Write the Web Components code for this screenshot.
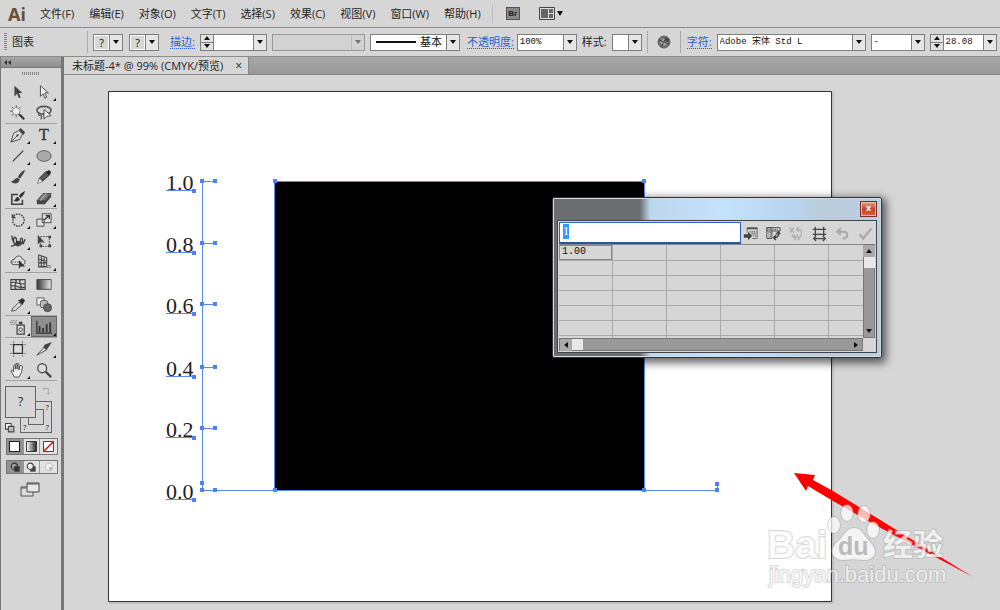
<!DOCTYPE html>
<html lang="zh-CN">
<head>
<meta charset="utf-8">
<title>未标题-4</title>
<style>
html,body{margin:0;height:100%}
body{font:11px/16px "Open Sans","Noto Sans CJK SC",sans-serif;color:#262626;background:#d6d6d6;overflow:hidden}
</style>
</head>
<body>
<design-app></design-app>
<script>
const define=(name,html,setup)=>customElements.define(name,class extends HTMLElement{
  connectedCallback(){
    if(this.shadowRoot)return;
    const root=this.attachShadow({mode:"open"});
    root.innerHTML=typeof html==="function"?html(this):html;
    if(setup)setup(this,root);
  }
});

const ICONS={
select:'<path d="M5 2v12l3-3 2 5 2-1-2-5h4z" fill="#444"/>',
direct:'<path d="M5 2v12l3-3 2 5 2-1-2-5h4z" fill="#eee" stroke="#444"/>',
wand:'<path d="M10 10l6 6" stroke="#333" stroke-width="2.4"/><circle cx="7" cy="7" r="4" fill="#eee" stroke="#666" stroke-dasharray="2 1"/><path d="M7 0v3M7 11v3M0 7h3M2 2l2 2M12 2l-2 2M2 12l2-2" stroke="#555"/>',
lasso:'<ellipse cx="9" cy="6" rx="8" ry="4.500" fill="none" stroke="#555" stroke-width="1.8"/><path d="M4 9c-2 1-1 3 1 3s2 3 0 4" fill="none" stroke="#555" stroke-width="1.4"/><path d="M9 5v11l3-3 5-1z" fill="#eee" stroke="#444"/>',
pen:'<path d="M1 17l3-10 6-3 4 4-3 6z" fill="#ddd" stroke="#444"/><path d="M10 3l2-2 5 5-2 3z" fill="#444"/><path d="M2 16l6-6" stroke="#444"/><circle cx="8.500" cy="9.500" r="1.300" fill="#444"/>',
type:'<text x="9" y="15" text-anchor="middle" font-family="Liberation Serif,serif" font-size="18" fill="#333" stroke="#333" stroke-width=".4">T</text>',
line:'<path d="M3 15L15 3" stroke="#444" stroke-width="1.400"/>',
ellipse:'<ellipse cx="9" cy="9" rx="8" ry="6" fill="#aaa" stroke="#555"/>',
brush:'<path d="M17 1c-4 1-7 5-8 8l2 2c2-3 5-6 6-10z" fill="#444"/><path d="M9 10c-3-1-4 4-8 4 4 4 9 2 10-2z" fill="#444"/>',
pencil:'<path d="M2 16l2-6 7-7 4 4-8 7z" fill="#555" stroke="#333"/><path d="M11 3l4 4 2-3-2-3z" fill="#222"/><path d="M2 16l2-5 3 3z" fill="#eee"/>',
blob:'<path d="M9 5H2v11h12v-5" fill="none" stroke="#444" stroke-width="1.800"/><path d="M17 1c-3 1-6 4-7 6l2 2c2-2 4-4 5-8z" fill="#333"/><path d="M9 8c-3 0-2 3-5 4 4 2 7 0 7-2z" fill="#333"/>',
eraser:'<path d="M1 12l7-8h9l-7 8z" fill="#777" stroke="#444"/><path d="M1 12h9v4H1zM10 12l7-8v4l-7 8z" fill="#444"/><path d="M5 12l6-8" stroke="#ccc"/>',
rotate:'<path d="M4 4c5-4 12 0 12 5s-6 9-10 6-3-6-2-8" fill="none" stroke="#444" stroke-width="1.500" stroke-dasharray="2 1"/><path d="M2 2v5h5z" fill="#444"/>',
scale:'<path d="M7 2h10v10H7zM1 8h8v8H1z" fill="#ddd" stroke="#444"/><path d="M9 9l6-5M11 4h4v4" fill="none" stroke="#333" stroke-width="1.400"/>',
width:'<path d="M2 3c1 6 2 9 4 9s2-6 0-7-3 4-1 7 6 3 8 0 1-6 0-6-2 3-1 5 4 0 5-4M1 15c6-1 9-5 15-3" fill="none" stroke="#444" stroke-width="1.600"/><path d="M7 9h4v4H7z" fill="#333"/>',
free:'<path d="M5 4h10v11H5z" fill="none" stroke="#444" stroke-dasharray="2 1"/><path d="M2 2v11l3-3 5 1z" fill="#444"/><path d="M14 3h3v3h-3zM14 13h3v3h-3zM4 13h3v3H4z" fill="#444"/>',
shape:'<path d="M5 12c-5 0-5-6 0-6 1-5 8-5 9 0 4 0 4 6 0 6z" fill="#ddd" stroke="#444"/><path d="M2 9h11" stroke="#555" stroke-dasharray="2 1"/><path d="M10 7v10l2-3h5z" fill="#333"/>',
persp:'<path d="M3 1l9 3v10H3zM6 2v12M9 3v11M3 6l9 2M3 10h9" fill="none" stroke="#444" stroke-width="1.200"/><path d="M2 15h15M12 13h5" stroke="#777"/>',
mesh:'<path d="M1 4h16v11H1zM1 8c5-4 10 4 16 0M1 12c5-4 10 4 16 0M6 4c4 4-4 6 1 11M12 4c-4 4 4 7-1 11" fill="none" stroke="#444" stroke-width="1.300"/>',
gradient:'<defs><linearGradient id="g"><stop stop-color="#333"/><stop offset="1" stop-color="#eee"/></linearGradient></defs><path d="M1 4h16v11H1z" fill="url(#g)" stroke="#444"/>',
dropper:'<path d="M2 16l1-3 7-7 3 3-7 6z" fill="#ddd" stroke="#444"/><path d="M9 4l5 5 1-2 2-3-3-3-3 2z" fill="#333"/>',
blend:'<path d="M1 1h8v8H1z" fill="#eee" stroke="#555"/><rect x="5" y="4" width="8" height="8" rx="2" fill="#bbb" stroke="#555"/><circle cx="13" cy="12" r="4.500" fill="#666" stroke="#444"/>',
spray:'<path d="M8 7h8v10H8z" fill="#ddd" stroke="#444" stroke-width="1.400"/><path d="M10 3h4v3h-4z" fill="#444"/><circle cx="12" cy="12" r="2" fill="none" stroke="#444"/><path d="M1 2h8M0 4h8M1 6h7" stroke="#555" stroke-dasharray="1 1"/>',
graph:'<path d="M1 2v14h17" fill="none" stroke="#333" stroke-width="1.400"/><path d="M3 8h2v7H3zM7 10h2v5H7zM11 6h2v9h-2zM15 4h2v11h-2z" fill="#333"/>',
artboard:'<path d="M4 0v18M14 0v18M0 4h18M0 14h18" stroke="#777" stroke-dasharray="3 1"/><path d="M4 4h10v10H4z" fill="#ddd" stroke="#333" stroke-width="1.400"/>',
slice:'<path d="M1 16l8-9 3 3z" fill="#ddd" stroke="#444"/><path d="M8 7l2-3 8-3-6 9z" fill="#444"/>',
hand:'<path d="M5 17L1 10c1-2 2 0 3 1V5c0-2 2-2 2 0v3-5c0-2 2-2 2 0v5-5c0-2 2-2 2 0v6l1-4c0-2 3-1 3 0l-1 7-3 5z" fill="#eee" stroke="#444"/>',
zoom:'<circle cx="7" cy="7" r="5" fill="#ddd" stroke="#555" stroke-width="1.600"/><path d="M11 11l6 6" stroke="#444" stroke-width="2.600"/>',
screen:'<path d="M0 5h12v9H0z" fill="#ddd" stroke="#555"/><path d="M6 1h12v9H6z" fill="#e6e6e6" stroke="#444"/><path d="M6 2h12M0 6h5" stroke="#555"/>',
import:'<path d="M5 2h12v13h-6M5 2v6" fill="none" stroke="#777" stroke-width="1.200"/><path d="M5 3h12" stroke="#555" stroke-width="2"/><path d="M8 7h8M10 9.500h6M12 12h4" stroke="#555" stroke-width="1.400" stroke-dasharray="1.500 1"/><path d="M1 10h5V7l5 5-5 5v-3H1z" fill="#444"/>',
transpose:'<path d="M1 2h16v4H1zM1 2h6v13H1z" fill="none" stroke="#555" stroke-width="1.200"/><path d="M3 4h3M3 8h3M3 10.500h3M3 13h3M9 4h6" stroke="#555" stroke-width="1.400" stroke-dasharray="1 1"/><path d="M10 14c4 0 5-2 5-5M12 10l3-3 2 3M12 11l-3 3 3 3" fill="none" stroke="#333" stroke-width="1.500"/>',
swap:'<path d="M1 2l5 6M6 2L1 8M9 10l3 4M15 10l-4 7M10 4c4 0 5 1 5 5M12 1L9 4l3 3M8 14c-3 0-4-1-4-4M6 11l3 3-3 3" fill="none" stroke="#aaa" stroke-width="1.500"/>',
cell:'<path d="M1 4h16M1 10h16M4 1v11M14 1v11M3 15h12" stroke="#444" stroke-width="1.500"/><path d="M5 12l-3 3 3 3M13 12l3 3-3 3" fill="none" stroke="#444" stroke-width="1.500"/>',
undo:'<path d="M4 7h7c5 0 5 7 0 8H9" fill="none" stroke="#aaa" stroke-width="2.400"/><path d="M7 1v11L1 7z" fill="#aaa"/>',
check:'<path d="M2 10l4 5L16 3" fill="none" stroke="#aaa" stroke-width="3"/>',
swapmini:'<path d="M4 4h8v9M6 1L3 4l3 3M9 11l3 3 3-3" fill="none" stroke="#aaa" stroke-width="1.600"/>',
defaults:'<path d="M1 1h10v10H1z" fill="#fff" stroke="#444" stroke-width="2"/><path d="M6 6h10v10H6z" fill="#bbb" stroke="#444" stroke-width="2"/>',
none:'<path d="M3 3h12v12H3z" fill="#fff" stroke="#222"/><path d="M3 15L15 3" stroke="#e11" stroke-width="2"/>',
solid:'<path d="M3 3h12v12H3z" fill="#fff" stroke="#222" stroke-width="1.400"/>',
grad2:'<defs><linearGradient id="g"><stop stop-color="#fff"/><stop offset="1" stop-color="#222"/></linearGradient></defs><path d="M3 3h12v12H3z" fill="url(#g)" stroke="#222"/>',
drawn:'<circle cx="8" cy="8" r="4" fill="#999" stroke="#333" stroke-width="1.400"/><path d="M8 8h7v7H8z" fill="#333"/>',
drawb:'<path d="M8 8h7v7H8z" fill="#444"/><circle cx="8" cy="8" r="4" fill="#eee" stroke="#444" stroke-width="1.400"/>',
drawi:'<circle cx="9" cy="9" r="5" fill="#eee" stroke="#bbb"/><path d="M9 9h4v4H9z" fill="#bbb"/>'
};

define("ui-icon",el=>`<style>:host{display:inline-block;width:var(--icon,18px);height:var(--icon,18px)}svg{display:block;width:100%;height:100%;overflow:visible}</style>
<svg viewBox="0 0 18 18" fill="none" aria-hidden="true">${ICONS[el.getAttribute("name")]}</svg>`);

define("menu-bar",`<style>
:host{display:flex;align-items:center;height:27px;border-bottom:1px solid #8c8c8c;padding-left:8px;white-space:nowrap}
.logo{font:bold 18px/24px "Noto Sans",sans-serif;color:#6e4f31;width:32px}
nav{display:flex;gap:15px}
button{font:inherit;color:inherit;border:0;background:none;padding:0}
.rule{width:1px;height:18px;background:#bbb;margin:0 13px 0 11px}
.br{width:14px;height:13px;background:#888;border:1px solid #555;font:bold 8px/11px "Liberation Sans",sans-serif;color:#222}
.ws{margin-left:19px;display:flex;align-items:center;gap:2px}
</style>
<span class="logo">Ai</span>
<nav><button>文件(F)</button><button>编辑(E)</button><button>对象(O)</button><button>文字(T)</button><button>选择(S)</button><button>效果(C)</button><button>视图(V)</button><button>窗口(W)</button><button>帮助(H)</button></nav>
<span class="rule"></span><button class="br" aria-label="Bridge">Br</button>
<button class="ws" aria-label="排列文档"><svg width="16" height="13"><path d="M.5.5h15v12H.5z" fill="#ddd" stroke="#444"/><path d="M2 2h7v9H2zM10 2h4v4h-4zM10 7h4v4h-4z" fill="#666"/></svg><svg width="6" height="5"><path d="M0 0h6L3 5z" fill="#111"/></svg></button>`);

/* Drop-down: a read-only list, or an editable field with a list button */
define("combo-box",el=>{
  const v=el.getAttribute("value")||"",label=el.getAttribute("label")||"",off=el.hasAttribute("disabled")?"disabled":"";
  const spin=el.hasAttribute("spin")?`<span class="spin"><button aria-label="增加"><svg width="6" height="4"><path d="M3 0l3 4H0z" fill="#111"/></svg></button><button aria-label="减少"><svg width="6" height="4"><path d="M0 0h6L3 4z" fill="#111"/></svg></button></span>`:"";
  const field=el.hasAttribute("editable")?`<input aria-label="${label}" value="${v}">`:`<select aria-label="${label}" ${off}><option>${v}</option></select>`;
  return `<style>
:host{display:flex;box-sizing:border-box;height:17px;border:1px solid #7f7f7f;background:#fff;flex:none}
:host([disabled]){background:#d2d2d2;border-color:#999}
.spin{width:12px;border-right:1px solid #7f7f7f;display:flex;flex-direction:column;background:#e2e2e2}
.spin button{flex:1;min-height:0;padding:0;border:0;background:none;display:flex;align-items:center;justify-content:center}
.spin button+button{border-top:1px solid #7f7f7f}
input,select{flex:1;min-width:0;width:0;appearance:none;border:0;border-radius:0;padding:0 2px 1px;background:none;color:#111;opacity:1;font:var(--field,9px/14px "Liberation Mono","Noto Sans CJK SC",monospace)}
.arrow{width:12px;flex:none;border-left:1px solid #7f7f7f;background:#e6e6e6;display:flex;align-items:center;justify-content:center;pointer-events:none}
:host([disabled]) .arrow{background:#d2d2d2;border-color:#aaa;opacity:.5}
:host([tinted]) select{background:#d6d6d6;margin:1px;padding:0;text-align:center;text-align-last:center}
</style>${spin}<slot></slot>${field}<span class="arrow"><svg width="6" height="4"><path d="M0 0h6L3 4z" fill="#111"/></svg></span>`;
});

define("control-bar",`<style>
:host{display:flex;align-items:center;height:28px;border-bottom:1px solid #8c8c8c;padding-left:4px;white-space:nowrap;overflow:hidden}
:host>*{flex:none}
.grip{width:3px;height:18px;background:repeating-linear-gradient(#888 0 1px,transparent 1px 2px);margin-right:5px}
.what{width:75px}
.rule{width:1px;height:22px;background:#aaa}
a{color:#2a5fd0;text-decoration:none;border-bottom:1px dotted #2a5fd0;line-height:13px}
combo-box{--w:30px;width:var(--w)}
.sans{--field:11px/13px "Open Sans","Noto Sans CJK SC",sans-serif}
.set{display:flex;align-items:center;gap:5px}
.wide{gap:6px}
.near{gap:3px}
.stroke{display:block;width:40px;height:2px;background:#111;margin:6px 2px 0 5px}
</style>
<span class="grip"></span><span class="what">图表</span><span class="rule"></span>
<div class="set wide" style="margin:0 11px 0 5px"><combo-box class="sans" tinted label="填色" value="?"></combo-box><combo-box class="sans" tinted label="描边颜色" value="?"></combo-box></div>
<div class="set"><a href="#stroke">描边:</a><combo-box spin editable label="描边粗细" style="--w:67px"></combo-box><combo-box disabled label="变量宽度" style="--w:93px"></combo-box><combo-box class="sans" label="画笔" value="基本" style="--w:90px"><span class="stroke"></span></combo-box></div>
<div class="set" style="margin:0 5px 0 7px"><span class="set near"><a href="#opacity">不透明度:</a><combo-box editable label="不透明度" value="100%" style="--w:60px"></combo-box></span><label>样式:</label><combo-box label="样式"></combo-box></div>
<span class="rule"></span>
<svg width="14" height="14" viewBox="0 0 14 14" style="margin:0 9px"><defs><radialGradient id="r"><stop stop-color="#ccc"/><stop offset="1" stop-color="#555"/></radialGradient></defs><circle cx="7" cy="7" r="6" fill="url(#r)" stroke="#666"/><path d="M2 5l5 2 2-5M7 7l5 2M7 7l-3 5" stroke="#444" fill="none"/><circle cx="10" cy="5" r="2" fill="#444"/></svg>
<span class="rule"></span>
<div class="set" style="margin-left:6px"><a href="#char">字符:</a><combo-box label="字体" editable value="Adobe 宋体 Std L" style="--w:149px"></combo-box><combo-box label="字体样式" value="-" style="--w:54px"></combo-box><combo-box label="字号" spin editable value="28.08" style="--w:67px"></combo-box></div>`);

define("tool-button",el=>`<style>
:host{display:block;position:relative;height:21px}
button{display:flex;align-items:center;justify-content:center;box-sizing:border-box;width:100%;height:100%;border:0;padding:0;background:none}
:host([active]) button{background:#8f8f8f;border:1px solid #666}
.more{position:absolute;right:1px;bottom:1px;width:3px;height:3px;background:#111;clip-path:polygon(100% 0,100% 100%,0 100%)}
ui-icon{--icon:16px}
</style><button aria-label="${el.getAttribute("icon")}"><ui-icon name="${el.getAttribute("icon")}"></ui-icon></button>${el.hasAttribute("more")?'<span class="more"></span>':""}`);

const TOOLS=["select direct+/wand lasso","pen+ type+/line+ ellipse+/brush pencil+/blob eraser+","rotate+ scale+/width+ free/shape+ persp+","mesh gradient/dropper+ blend","spray+ graph+*","artboard slice+/hand+ zoom"];
define("tool-panel",()=>`<style>
:host{display:block;box-sizing:border-box;width:64px;border:solid #777;border-width:0 3px 0 1px;background:#d6d6d6;flex:none}
header{height:10px;background:linear-gradient(#a8a8a8,#8f8f8f);border-bottom:1px solid #777;padding-left:3px;display:flex;align-items:center}
.grip{width:18px;height:3px;margin:4px auto 6px;background:repeating-linear-gradient(90deg,#888 0 1px,transparent 1px 2px)}
section{display:grid;grid-template-columns:26px 26px;margin:0 4px;border-bottom:1px solid #a2a2a2}
.paint{display:grid;grid-template-columns:15px 16px 16px;grid-template-rows:15px 17px 15px;margin:5px 4px}
.fill,.line{box-sizing:border-box;border:1px solid #666;background:#d6d6d6;font:12px/14px "Open Sans",sans-serif;color:#222;padding:0}
.fill{grid-area:1/1/3/3;z-index:1}
.line{grid-area:2/2/4/4;display:grid;grid-template-columns:1fr 1fr;padding:0 2px;font:8px/10px "Open Sans",sans-serif;text-align:right;align-content:space-between;background:linear-gradient(#666,#666) 7px 7px/16px 1px no-repeat,linear-gradient(#666,#666) 7px 22px/16px 1px no-repeat,linear-gradient(#666,#666) 7px 7px/1px 16px no-repeat,linear-gradient(#666,#666) 22px 7px/1px 16px no-repeat,#d6d6d6}
.line :first-child{grid-column:1/3}.line :nth-child(2){text-align:left}
.a{grid-area:1/3;justify-self:end;--icon:11px}.b{grid-area:3/1;align-self:end;--icon:10px}
.seg{display:grid;grid-template-columns:repeat(3,1fr);width:50px;height:15px;border:1px solid #777;margin:0 4px 5px 5px}
.seg button{padding:0;border:0;border-right:1px solid #999;background:#e2e2e2;display:flex;align-items:center;justify-content:center;min-width:0;min-height:0;--icon:15px}
.seg.low{height:12px;--icon:12px}.seg button:first-child{background:#929292}.seg button:last-child{border:0}
.seg.low button{--icon:14px}
.screen{display:block;border:0;background:none;padding:0;margin:8px 0 0 20px;--icon:18px}
</style>
<header><svg width="7" height="5"><path d="M3 0v5L0 2.500zM7 0v5L4 2.500z" fill="#333"/></svg></header>
<div class="grip"></div>
${TOOLS.map(s=>`<section>${s.split(/[ /]/).map(t=>`<tool-button icon="${t.replace(/[+*]/g,"")}"${t.includes("+")?" more":""}${t.includes("*")?" active":""}></tool-button>`).join("")}</section>`).join("")}
<div class="paint"><button class="fill" aria-label="填色">?</button><button class="line" aria-label="描边"><span>?</span><span>?</span><span>?</span></button><ui-icon class="a" name="swapmini"></ui-icon><ui-icon class="b" name="defaults"></ui-icon></div>
<div class="seg"><button aria-label="颜色"><ui-icon name="solid"></ui-icon></button><button aria-label="渐变"><ui-icon name="grad2"></ui-icon></button><button aria-label="无"><ui-icon name="none"></ui-icon></button></div>
<div class="seg low"><button aria-label="正常绘图"><ui-icon name="drawn"></ui-icon></button><button aria-label="背面绘图"><ui-icon name="drawb"></ui-icon></button><button aria-label="内部绘图"><ui-icon name="drawi"></ui-icon></button></div>
<button class="screen" aria-label="更改屏幕模式"><ui-icon name="screen"></ui-icon></button>`);

define("document-tabs",`<style>
:host{display:flex;height:17px;background:linear-gradient(#a8a8a8,#989898);border-bottom:1px solid #888}
.tab{display:flex;align-items:center;gap:12px;padding:0 6px 0 8px;background:#d6d6d6;border-right:1px solid #888;white-space:nowrap}
button{border:0;background:none;padding:0;font:12px/14px "Open Sans",sans-serif;color:#222}
</style><div class="tab"><slot></slot><button aria-label="关闭">×</button></div>`);

/* The plotted graph with its selection handles */
define("graph-art",()=>{
  const ys=[106,168,229,292,353,415],names=["1.0","0.8","0.6","0.4","0.2","0.0"];
  const dot=(x,y)=>`<path d="M${x-2} ${y-2}h4v4h-4z"/>`;
  return `<style>:host{display:block}svg{display:block;overflow:visible}text{font:22px "Liberation Serif",serif;fill:#222}.k{stroke:#5b87f5;fill:none}.d{fill:#4f80f7}</style>
<svg width="768" height="528">
<path d="M44.500 16.500H767.500V526.500H44.500z" fill="#fff" stroke="#333"/><path d="M45 528H769V17" fill="none" stroke="#aaa"/>
<path d="M211 107h369v308H211z" fill="#000"/>
<path class="k" d="M138.500 106v309M138 415.500h515.500v-5M210.500 415V106.500h370V415"/>
${ys.map((y,i)=>`<text x="102" y="${y+9}">${names[i]}</text><path class="k" d="M102 ${y+9.5}h29M138 ${y+.5}h14"/><g class="d">${dot(130,y+10)}${dot(138,y)}${dot(151,y)}</g>`).join("")}
<g class="d">${dot(138,408)}${dot(211,106)}${dot(580,106)}${dot(211,415)}${dot(580,415)}${dot(653,409)}${dot(653,415)}</g></svg>`;
});

define("graph-data",()=>`<style>
:host{display:flex;flex-direction:column;box-sizing:border-box;width:330px;height:161px;padding:0 4px 4px;border:1px solid #333;box-shadow:inset 0 0 0 1px #cfdde8,2px 3px 8px 2px #0009;border-radius:2px;background:linear-gradient(90deg,#6c6f72 0 87px,#bcd6ec 97px,#c5e2fd 170px,#b8d4ed 240px,#bccbd8 275px,#b9d0e5)}
header{height:22px;display:flex;justify-content:flex-end;align-items:center}
header button{width:17px;height:16px;box-sizing:border-box;padding:0 0 2px;border:1px solid #7b2b20;background:linear-gradient(#e8a591,#c94426 50%,#d8603d);color:#fff;font:bold 9px/10px "Open Sans",sans-serif;box-shadow:inset 0 0 0 1px #f3b8a5}
.body{flex:1;border:1px solid #444;background:#d6d6d6;padding:1px;display:grid;grid-template-columns:1fr 12px;grid-template-rows:22px 1fr 13px;min-height:0}
.top{grid-column:1/3;display:flex;align-items:center}
input{box-sizing:border-box;width:182px;height:22px;border:1px solid #2a62b8;border-bottom:2px solid #2b5599;background:#fff;padding:0 3px 2px;outline:0;font:12px/14px "Liberation Serif",serif}
input::selection{background:#39f;color:#fff}
.icons{flex:1;display:flex;justify-content:space-between;padding:0 2px;--icon:15px}
.icons button{border:0;padding:0;background:none;display:flex}
.sheet{overflow:hidden;border-top:1px solid #888}
table{border-collapse:collapse;table-layout:fixed;width:324px;font:10px/12px "Liberation Mono",monospace}
td{border:1px solid #aaa;border-left:0;height:15px;padding:0 3px;box-sizing:border-box;color:#111}
tr:first-child td{border-top:0}
td.on{box-shadow:inset 0 0 0 1px #888}
.v,.h{background:#999;display:flex;border:1px solid #777;box-sizing:border-box}
.v{flex-direction:column;align-items:center}
.end{flex:none;background:#aaa;width:12px;height:12px;display:flex;align-items:center;justify-content:center}
.v .end:last-child,.h .end:last-child{margin-top:auto;background:none}
.h .end:last-child{margin:0 0 0 auto}
.thumb{width:11px;height:11px;background:#e8e8e8;flex:none}
</style>
<header><button aria-label="关闭">x</button></header>
<div class="body"><div class="top"><input aria-label="单元格数值" value="1"><div class="icons">${["import","transpose","swap","cell","undo","check"].map(n=>`<button aria-label="${n}"><ui-icon name="${n}"></ui-icon></button>`).join("")}</div></div>
<div class="sheet"><table>${Array.from({length:7},(_,r)=>`<tr>${Array.from({length:6},(_,c)=>`<td${r+c?"":' class="on"'}>${r+c?"":"1.00"}</td>`).join("")}</tr>`).join("")}</table></div>
<div class="v"><span class="end"><svg width="6" height="4"><path d="M3 0l3 4H0z" fill="#111"/></svg></span><span class="thumb"></span><span class="end"><svg width="6" height="4"><path d="M0 0h6L3 4z" fill="#111"/></svg></span></div>
<div class="h"><span class="end"><svg width="4" height="6"><path d="M4 0v6L0 3z" fill="#111"/></svg></span><span class="thumb"></span><span class="end"><svg width="4" height="6"><path d="M0 0v6l4-3z" fill="#111"/></svg></span></div></div>`,
(el,root)=>{const i=root.querySelector("input");i.focus({preventScroll:true});i.select();});

define("red-arrow",`<style>:host{display:block}svg{display:block}</style><svg width="181" height="106"><path d="M0 0l21 2-2 5 20 11 44 27 96 59-96-51-44-25L14 13l-2 5z" fill="#f00"/></svg>`);

define("site-mark",`<style>:host{display:block}svg{display:block;overflow:visible}text,.p{fill:#fff;fill-opacity:.72;stroke:#999;stroke-opacity:.35;stroke-width:2;paint-order:stroke;font-family:"Liberation Sans","Noto Sans CJK SC",sans-serif}.b{font-weight:bold}.du{fill:#bbb;stroke:none;fill-opacity:1}</style>
<svg width="180" height="84">
<text class="b" x="0" y="54" font-size="39">Bai</text>
<g class="p"><ellipse cx="67" cy="21" rx="6" ry="8"/><ellipse cx="80" cy="9" rx="6" ry="8"/><ellipse cx="97" cy="10" rx="6" ry="8"/><ellipse cx="106" cy="26" rx="6" ry="8"/><path d="M87 24c8 0 10 8 16 14 10 10 4 19-8 18-6-1-11-1-17 0-12 1-17-9-8-18 7-6 9-14 17-14z"/></g>
<text class="b du" x="71" y="51" font-size="25">du</text>
<text class="b" x="116" y="51" font-size="30">经验</text>
<text x="2" y="78" font-size="22">jingyan.baidu.com</text></svg>`);

define("design-app",`<style>
:host{display:flex;flex-direction:column;height:100vh}
main{flex:1;display:flex;min-height:0}
.doc{flex:1;min-width:0;display:flex;flex-direction:column}
.canvas{flex:1;position:relative;overflow:hidden;background:#d6d6d6}
.canvas>*{position:absolute}
graph-art{left:0;top:0}graph-data{left:488px;top:122px}red-arrow{left:730px;top:398px}site-mark{left:703px;top:429px}
</style>
<menu-bar></menu-bar><control-bar></control-bar>
<main><tool-panel></tool-panel><div class="doc"><document-tabs>未标题-4* @ 99% (CMYK/预览)</document-tabs>
<div class="canvas"><graph-art></graph-art><graph-data></graph-data><red-arrow></red-arrow><site-mark></site-mark></div></div></main>`);
</script>
</body>
</html>
